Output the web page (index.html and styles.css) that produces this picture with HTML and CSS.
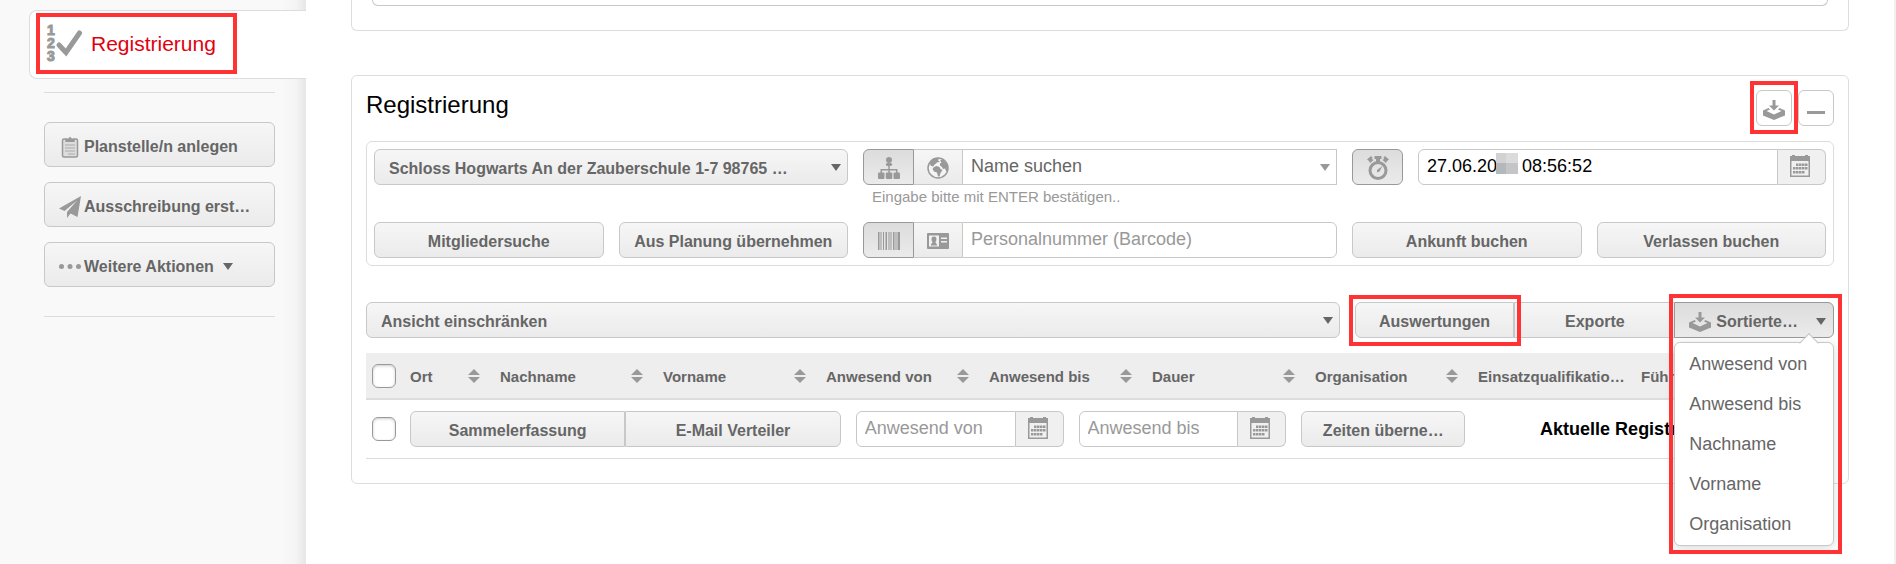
FILE: index.html
```html
<!DOCTYPE html>
<html lang="de">
<head>
    <meta charset="UTF-8">
    <meta name="viewport" content="width=device-width, initial-scale=1.0">
    <title>Registrierung</title>
    <link rel="stylesheet" href="styles.css">
</head>
<body>
    <!-- shared icons -->
    <svg class="sprite" width="0" height="0" aria-hidden="true">
        <symbol id="i-calendar" viewBox="0 0 20 22">
            <path d="M0 1h2V0h3v1h10V0h3v1h2v21H0zM1.500 6v14.500h17V6z" fill-rule="evenodd"/>
            <path d="M6 8.500h2.500V11H6zM9 8.500h2.500V11H9zM12 8.500h2.500V11H12zM15 8.500h2.500V11H15zM3 12h2.500v2.500H3zM6 12h2.500v2.500H6zM9 12h2.500v2.500H9zM12 12h2.500v2.500H12zM15 12h2.500v2.500H15zM3 16h2.500v2.500H3zM6 16h2.500v2.500H6zM9 16h2.500v2.500H9zM12 16h2.500v2.500H12z"/>
        </symbol>
        <symbol id="i-inbox" viewBox="0 0 22 20">
            <path d="M9.500 0h3v5.500H16L11 10.500 6 5.500h3.500z"/>
            <path d="M5.500 8L7 9.500 3.500 11l7.500 3.500 7.500-3.500L15 9.500 16.500 8 22 10.500v5L11 20 0 15.500v-5z"/>
        </symbol>
    </svg>

    <aside class="sidebar">
        <a class="tab" href="#registrierung">
            <svg class="tab-icon" width="36" height="42" viewBox="0 0 36 42">
                <text x="0" y="12">1</text>
                <text x="0" y="25">2</text>
                <text x="0" y="38">3</text>
                <path d="M12 22l7 7.500L32.500 10" fill="none" stroke="#999" stroke-width="5" stroke-linecap="round"/>
            </svg>
            Registrierung
            <span class="mark mark-tab"></span>
        </a>
        <div class="actions">
            <button type="button" class="btn action">
                <svg class="icon" width="22" height="22" viewBox="0 0 22 22">
                    <path d="M5 3h2v2h8V3h2a1.500 1.500 0 0 1 1.500 1.500v15A1.500 1.500 0 0 1 17 21H5a1.500 1.500 0 0 1-1.500-1.500v-15A1.500 1.500 0 0 1 5 3z" fill="#ddd" stroke="#999" stroke-width="1.500"/>
                    <path d="M7 2.500h2.500a1.500 1.500 0 0 1 3 0H15V6H7z"/>
                    <path d="M6 9h10M6 12h10M6 15h10M9 18h7" stroke="#aaa" stroke-width="1"/>
                </svg>
                Planstelle/n anlegen
            </button>
            <button type="button" class="btn action">
                <svg class="icon" width="22" height="22" viewBox="0 0 22 22">
                    <path d="M22 0L0 12.500l5.500 2.500L18 4.500 8 16v6l3.500-4.500 7 3.500z"/>
                </svg>
                Ausschreibung erst…
            </button>
            <button type="button" class="btn action">
                <svg class="icon" width="22" height="22" viewBox="0 0 22 22">
                    <circle cx="2.500" cy="10.500" r="2.500"/><circle cx="11" cy="10.500" r="2.500"/><circle cx="19.500" cy="10.500" r="2.500"/>
                </svg>
                Weitere Aktionen
                <span class="caret"></span>
            </button>
        </div>
    </aside>

    <main class="content">
        <section class="panel panel-top">
            <div class="panel-top-inner"></div>
        </section>

        <section class="panel" id="registrierung">
            <header class="panel-head">
                <h2>Registrierung</h2>
                <div class="tools">
                    <div class="marked">
                        <button type="button" class="tool" aria-label="Export">
                            <svg class="icon" width="22" height="20"><use href="#i-inbox"/></svg>
                        </button>
                        <span class="mark mark-tool"></span>
                    </div>
                    <button type="button" class="tool" aria-label="Einklappen">
                        <svg class="icon" width="18" height="20" viewBox="0 0 18 20"><path d="M0 11h18v3H0z"/></svg>
                    </button>
                </div>
            </header>

            <form class="booking">
                <div class="dropdown span-2">
                    <select class="btn" aria-label="Ort">
                        <option>Schloss Hogwarts An der Zauberschule 1-7 98765 …</option>
                    </select>
                </div>
                <div class="span-2">
                    <div class="group">
                        <button type="button" class="btn seg active" aria-label="Eigene Organisation">
                            <svg class="icon" width="22" height="22" viewBox="0 0 22 22">
                                <circle cx="11" cy="3" r="3"/>
                                <path d="M7.500 7.500L9 6h4l1.500 1.500L13 9H9zM10.300 8h1.500v8h-1.500zM2.500 12h17v4H18v-2.500H4V16H2.500z"/>
                                <rect x="0" y="15.500" width="6.500" height="6.500" rx="1"/><rect x="7.800" y="15.500" width="6.500" height="6.500" rx="1"/><rect x="15.500" y="15.500" width="6.500" height="6.500" rx="1"/>
                            </svg>
                        </button>
                        <button type="button" class="btn seg" aria-label="Alle Organisationen">
                            <svg class="icon" width="22" height="22" viewBox="0 0 22 22">
                                <circle cx="11" cy="11" r="10" fill="#f4f4f4" stroke="#999" stroke-width="1.500"/>
                                <path d="M3 5l4-3 5-1-1 2.500 2 1-3 1-1.500 1.500L7 8l-.5 1.500L4 9 3 7z"/>
                                <path d="M7 10l2.500-1 3 1 1 2 2 1-2 3-1 3.500-1.500 0-1-4L7 14.500 5.500 12zM13 3.500l3-1 4 4.500 1 4-1.500 4-1.500-3.500-2 .500-1-2-2-1.500 0-2 1.500-1z"/>
                            </svg>
                        </button>
                        <div class="dropdown dropdown-plain">
                            <select class="field" aria-label="Name suchen" aria-describedby="name-hint">
                                <option>Name suchen</option>
                            </select>
                        </div>
                    </div>
                    <p class="hint" id="name-hint">Eingabe bitte mit ENTER bestätigen..</p>
                </div>
                <div class="time span-2">
                    <button type="button" class="btn seg active" aria-label="Aktuelle Zeit">
                        <svg class="icon" width="22" height="24" viewBox="0 0 22 24">
                            <circle cx="11" cy="14.500" r="8" fill="none" stroke="#999" stroke-width="3"/>
                            <path d="M7.500 0h7v3H13v3H9V3H7.500zM0 3.500L4 0l1.500 1.500L5 3l1.500 1L3 7 2 5zM22 3.500L18 0l-1.500 1.500L17 3l-1.500 1L19 7l1-2zM15.500 10l-3 5.500-2.500 1 0-2.500z"/>
                        </svg>
                    </button>
                    <div class="group date-group">
                        <input class="field dark" type="text" aria-label="Zeitpunkt" value="27.06.20     08:56:52">
                        <span class="mosaic"><i></i><i></i><i></i><i></i></span>
                        <button type="button" class="addon" aria-label="Kalender"><svg class="icon" width="20" height="22"><use href="#i-calendar"/></svg></button>
                    </div>
                </div>

                <button type="button" class="btn">Mitgliedersuche</button>
                <button type="button" class="btn">Aus Planung übernehmen</button>
                <div class="group span-2">
                    <button type="button" class="btn seg active" aria-label="Barcode">
                        <svg class="icon" width="22" height="18" viewBox="0 0 22 18">
                            <path d="M0 0h1.500v18H0zM2.500 0h1v18h-1zM5 0h1v18H5zM7.500 0h1.500v18H7.500zM10.500 0h1v18h-1zM12.500 0h1v18h-1zM15 0h1.500v18H15zM17.500 0h1v18h-1zM19.500 0H22v18h-2.500z"/>
                        </svg>
                    </button>
                    <button type="button" class="btn seg" aria-label="Ausweis">
                        <svg class="icon" width="22" height="16" viewBox="0 0 22 16">
                            <path d="M1 0h20a1 1 0 0 1 1 1v14a1 1 0 0 1-1 1H1a1 1 0 0 1-1-1V1a1 1 0 0 1 1-1zM2 2.500v11h10v-11zM14 4.500V6h6V4.500zM14 8v1.500h6V8z" fill-rule="evenodd"/>
                            <path d="M7 3.500c3 0 3 3.500 1.500 5.500 0 1.500 1.500 1 1.500 3.500H4c0-2.500 1.500-2 1.500-3.500C4 7 4 3.500 7 3.500z"/>
                        </svg>
                    </button>
                    <input class="field last" type="text" aria-label="Personalnummer" placeholder="Personalnummer (Barcode)">
                </div>
                <button type="button" class="btn">Ankunft buchen</button>
                <button type="button" class="btn">Verlassen buchen</button>
            </form>

            <div class="toolbar">
                <div class="dropdown dropdown-view">
                    <select class="btn" aria-label="Ansicht einschränken">
                        <option>Ansicht einschränken</option>
                    </select>
                </div>
                <div class="reports">
                    <div class="marked">
                        <button type="button" class="btn">Auswertungen</button>
                        <span class="mark mark-report"></span>
                    </div>
                    <button type="button" class="btn export">Exporte</button>
                    <div class="marked">
                        <button type="button" class="btn active sort-btn" aria-expanded="true">
                            <svg class="icon" width="22" height="20"><use href="#i-inbox"/></svg>
                            Sortierte…
                            <span class="caret"></span>
                        </button>
                        <ul class="menu">
                            <li><a href="#">Anwesend von</a></li>
                            <li><a href="#">Anwesend bis</a></li>
                            <li><a href="#">Nachname</a></li>
                            <li><a href="#">Vorname</a></li>
                            <li><a href="#">Organisation</a></li>
                        </ul>
                        <span class="mark mark-menu"></span>
                    </div>
                </div>
            </div>

            <table class="list">
                <colgroup>
                    <col class="col-check"><col class="col-ort">
                    <col class="col-data"><col class="col-data"><col class="col-data"><col class="col-data">
                    <col class="col-data"><col class="col-data"><col class="col-data"><col>
                </colgroup>
                <thead>
                    <tr>
                        <th><input type="checkbox" aria-label="Alle auswählen"></th>
                        <th><div class="th">Ort<span class="sort"></span></div></th>
                        <th><div class="th">Nachname<span class="sort"></span></div></th>
                        <th><div class="th">Vorname<span class="sort"></span></div></th>
                        <th><div class="th">Anwesend von<span class="sort"></span></div></th>
                        <th><div class="th">Anwesend bis<span class="sort"></span></div></th>
                        <th><div class="th">Dauer<span class="sort"></span></div></th>
                        <th><div class="th">Organisation<span class="sort"></span></div></th>
                        <th><div class="th">Einsatzqualifikatio…</div></th>
                        <th><div class="th">Führung</div></th>
                    </tr>
                </thead>
                <tbody>
                    <tr>
                        <td><input type="checkbox" aria-label="Auswählen"></td>
                        <td colspan="9">
                            <div class="bulk">
                                <div class="group pair">
                                    <button type="button" class="btn">Sammelerfassung</button>
                                    <button type="button" class="btn">E-Mail Verteiler</button>
                                </div>
                                <div class="group date-group">
                                    <input class="field" type="text" aria-label="Anwesend von" placeholder="Anwesend von">
                                    <button type="button" class="addon" aria-label="Kalender"><svg class="icon" width="20" height="22"><use href="#i-calendar"/></svg></button>
                                </div>
                                <div class="group date-group">
                                    <input class="field" type="text" aria-label="Anwesend bis" placeholder="Anwesend bis">
                                    <button type="button" class="addon" aria-label="Kalender"><svg class="icon" width="20" height="22"><use href="#i-calendar"/></svg></button>
                                </div>
                                <button type="button" class="btn times">Zeiten überne…</button>
                                <strong class="count">Aktuelle Registrierungen: 0</strong>
                            </div>
                        </td>
                    </tr>
                </tbody>
            </table>
        </section>
    </main>
</body>
</html>
```

FILE: styles.css
```css
* {
    margin: 0;
    padding: 0;
    box-sizing: border-box;
}

body {
    display: flex;
    min-height: 100vh;
    border-right: 2px solid #f0f0f0;
    font-family: "Liberation Sans", Arial, sans-serif;
    font-size: 16px;
    color: #666;
    background-color: #fff;
}

button,
input,
select {
    font-family: inherit;
    outline: none;
}

.sprite {
    position: absolute;
}

.icon {
    flex: none;
    fill: #999;
}

/* red highlight frames */
.mark {
    position: absolute;
    z-index: 5;
    border: 4px solid #f33;
    pointer-events: none;
}

.marked {
    position: relative;
}

.mark-tab {
    inset: 2px auto 4px 6px;
    width: 201px;
}

.mark-tool {
    inset: -9px -6px -8px;
}

.mark-report {
    inset: -7px -7px -8px -6px;
}

.mark-menu {
    inset: -8px -8px -216px -5px;
}

/* sidebar */
.sidebar {
    flex: none;
    width: 306px;
    padding-top: 10px;
    background: linear-gradient(to left, #e6e6e6, #f4f4f4 10px, #f9f9f9 26px);
}

.tab {
    position: relative;
    display: flex;
    align-items: center;
    gap: 8px;
    height: 69px;
    margin-left: 29px;
    padding: 0 0 2px 17px;
    border: 1px solid #ddd;
    border-right: 0;
    border-radius: 8px 0 0 8px;
    background-color: #fff;
    color: #e2000f;
    font-size: 21px;
    text-decoration: none;
}

.tab-icon {
    overflow: visible;
}

.tab-icon text {
    fill: #999;
    stroke: #999;
    font-size: 14px;
    font-weight: bold;
}

.actions {
    display: flex;
    flex-direction: column;
    gap: 15px;
    margin: 13px 31px 0 44px;
    padding: 29px 0;
    border-top: 1px solid #ddd;
    border-bottom: 1px solid #ddd;
}

/* buttons and fields */
.btn {
    width: 100%;
    height: 36px;
    padding-top: 4px;
    border: 1px solid #c8c8c8;
    border-radius: 6px;
    background: linear-gradient(#f6f6f6, #ebebeb);
    color: #666;
    font-size: 16px;
    font-weight: bold;
    white-space: nowrap;
    cursor: pointer;
}

.btn.active {
    border-color: #999;
    background: linear-gradient(#dcdcdc, #ebebeb);
}

.action {
    display: flex;
    align-items: center;
    gap: 3px;
    height: 45px;
    padding-left: 14px;
}

.caret,
.dropdown::after {
    border: 5px solid transparent;
    border-top: 7px solid #666;
    border-bottom: 0;
}

.caret {
    margin-left: 6px;
}

.group {
    display: flex;
}

.seg {
    display: flex;
    flex: none;
    align-items: center;
    justify-content: center;
    width: 51px;
    padding-top: 2px;
}

.group .seg {
    border-right: 0;
    border-radius: 0;
}

.group .seg.active {
    border-right: 1px solid #999;
    border-radius: 6px 0 0 6px;
}

.group .seg + .seg {
    width: 48px;
    border-left: 0;
}

.field {
    width: 100%;
    min-width: 0;
    height: 36px;
    padding: 0 8px 2px;
    border: 1px solid #c8c8c8;
    background-color: #fff;
    color: #666;
    font-size: 18px;
}

.field::placeholder {
    color: #999;
}

.field.dark {
    color: #000;
}

.field.last {
    border-radius: 0 6px 6px 0;
}

.date-group {
    position: relative;
}

.date-group .field {
    border-radius: 6px 0 0 6px;
}

.addon {
    display: flex;
    flex: none;
    align-items: center;
    justify-content: center;
    width: 48px;
    height: 36px;
    padding: 0 3px 2px 0;
    border: 1px solid #c8c8c8;
    border-left: 0;
    border-radius: 0 6px 6px 0;
    background-color: #f0f0f0;
}

.dropdown {
    position: relative;
    flex: 1;
}

.dropdown select {
    display: block;
    appearance: none;
    padding: 2px 30px 0 14px;
}

.dropdown .field {
    padding: 0 30px 2px 8px;
}

.dropdown::after {
    content: '';
    position: absolute;
    top: 15px;
    right: 7px;
    pointer-events: none;
}

.dropdown-plain::after {
    border-top-color: #999;
}

/* panels */
.content {
    flex: 1;
    min-width: 0;
    padding: 0 45px;
}

.panel {
    padding: 14px 14px 24px;
    border: 1px solid #ddd;
    border-radius: 6px;
}

.panel-top {
    margin-bottom: 44px;
    padding: 0 20px 24px;
    border-top: 0;
    border-radius: 0 0 6px 6px;
}

.panel-top-inner {
    height: 6px;
    border: 1px solid #c8c8c8;
    border-top: 0;
    border-radius: 0 0 6px 6px;
}

.panel-head {
    display: flex;
    justify-content: space-between;
    margin-bottom: 15px;
}

.panel-head h2 {
    color: #000;
    font-size: 24px;
    font-weight: normal;
    line-height: 30px;
}

.tools {
    display: flex;
    gap: 6px;
}

.tool {
    display: flex;
    align-items: center;
    justify-content: center;
    width: 36px;
    height: 36px;
    padding-top: 4px;
    border: 1px solid #c8c8c8;
    border-radius: 6px;
    background-color: #fff;
}

.booking {
    display: grid;
    grid-template-columns: repeat(6, minmax(0, 1fr));
    gap: 16px 15px;
    margin-bottom: 36px;
    padding: 7px;
    border: 1px solid #ddd;
    border-radius: 6px;
}

.span-2 {
    grid-column: span 2;
}

.hint {
    padding: 3px 0 0 9px;
    color: #999;
    font-size: 15px;
    line-height: 18px;
}

.time {
    display: flex;
    gap: 15px;
}

.time .date-group {
    flex: 1;
}

.mosaic {
    position: absolute;
    top: 4px;
    left: 78px;
    display: grid;
    grid-template-columns: 10px 12px;
    grid-template-rows: 10px 11px;
}

.mosaic i {
    background-color: #d2d2d2;
}

.mosaic i:nth-child(2) {
    background-color: #dbdbdb;
}

.mosaic i:nth-child(3) {
    background-color: #b3b8bb;
}

.mosaic i:nth-child(4) {
    background-color: #c4c5c7;
}

/* toolbar above the list */
.toolbar {
    display: grid;
    grid-template-columns: repeat(6, minmax(0, 1fr));
    gap: 15px;
    margin-bottom: 15px;
}

.dropdown-view {
    grid-column: span 4;
}

.reports {
    display: grid;
    grid-template-columns: repeat(3, minmax(0, 1fr));
    grid-column: span 2;
}

.reports > .marked:first-child .btn {
    border-radius: 6px 0 0 6px;
}

.export {
    border-right: 0;
    border-radius: 0;
}

.sort-btn {
    display: flex;
    align-items: center;
    gap: 5px;
    padding: 3px 7px 0 14px;
    border-radius: 0 6px 6px 0;
}

.sort-btn .caret {
    margin-left: auto;
}

.menu {
    position: absolute;
    z-index: 3;
    top: 40px;
    left: 0;
    width: 100%;
    padding: 1px 0;
    border: 1px solid #c8c8c8;
    border-radius: 6px;
    background-color: #fff;
    box-shadow: 0 2px 10px rgba(0, 0, 0, 0.15);
    list-style: none;
}

.menu::before {
    content: '';
    position: absolute;
    top: -7px;
    right: 17px;
    width: 13px;
    height: 13px;
    border: 1px solid #c8c8c8;
    border-right: 0;
    border-bottom: 0;
    background: linear-gradient(135deg, #fff 50%, transparent 50%);
    transform: rotate(45deg);
}

.menu a {
    display: block;
    padding-left: 14px;
    color: #666;
    font-size: 18px;
    line-height: 40px;
    text-decoration: none;
}

/* list */
.list {
    width: 100%;
    border-collapse: separate;
    border-spacing: 0;
    table-layout: fixed;
}

.list th {
    height: 47px;
    padding: 1px 0 0 10px;
    border-bottom: 2px solid #ddd;
    background-color: #eee;
    font-size: 15px;
    text-align: left;
    white-space: nowrap;
}

.list td {
    height: 59px;
    padding-left: 10px;
    border-bottom: 1px solid #ddd;
}

.list th:first-child,
.list td:first-child {
    padding-left: 6px;
}

.col-check {
    width: 34px;
}

.col-ort {
    width: 90px;
}

.col-data {
    width: 163px;
}

.list input[type="checkbox"] {
    display: block;
    appearance: none;
    width: 24px;
    height: 24px;
    border: 1px solid #999;
    border-radius: 6px;
    background-color: #fff;
    box-shadow: inset 0 1px 3px rgba(0, 0, 0, 0.2);
}

.th {
    display: flex;
    align-items: center;
    justify-content: space-between;
    padding-right: 10px;
}

.sort::before,
.sort::after {
    content: '';
    display: block;
    border: 6px solid transparent;
}

.sort::before {
    margin-bottom: 2px;
    border-top: 0;
    border-bottom-color: #999;
}

.sort::after {
    border-top-color: #999;
    border-bottom: 0;
}

.bulk {
    display: grid;
    grid-template-columns: 431fr 208fr 208fr 164fr 354fr;
    align-items: center;
    gap: 15px;
}

.pair .btn:first-child {
    border-radius: 6px 0 0 6px;
}

.pair .btn:last-child {
    border-radius: 0 6px 6px 0;
}

.count {
    color: #000;
    font-size: 18px;
    text-align: center;
}
```
